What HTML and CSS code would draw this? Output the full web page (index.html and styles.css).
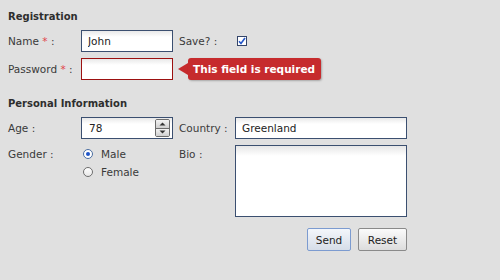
FILE: index.html
```html
<!DOCTYPE html>
<html>
<head>
<meta charset="utf-8">
<link rel="stylesheet" href="styles.css">
</head>
<body>
<div class="page">
  <h2 class="section-title">Registration</h2>
  <div class="grid">
    <label class="label">Name <span class="req">*</span> :</label>
    <input class="field" type="text" value="John">
    <label class="label label-2">Save? :</label>
    <div class="check-cell">
      <span class="checkbox">
        <svg width="8" height="8" viewBox="0 0 8 8"><path d="M1 4.2 L3 6.5 L7 1" fill="none" stroke="#2456c8" stroke-width="1.6"/></svg>
      </span>
    </div>

    <label class="label">Password <span class="req">*</span> :</label>
    <input class="field field-error" type="password" value="">
    <div class="tip-cell">
      <span class="tip-arrow"></span>
      <span class="tip">This field is required</span>
    </div>
  </div>

  <h2 class="section-title section-title-2">Personal Information</h2>
  <div class="grid">
    <label class="label">Age :</label>
    <div class="field spin-field">
      <span class="spin-value">78</span>
      <span class="spinner">
        <span class="spin-btn"><svg width="7" height="4" viewBox="0 0 7 4"><path d="M0.5 3.5 L3.5 0.5 L6.5 3.5Z" fill="#333"/></svg></span>
        <span class="spin-btn"><svg width="7" height="4" viewBox="0 0 7 4"><path d="M0.5 0.5 L3.5 3.5 L6.5 0.5Z" fill="#333"/></svg></span>
      </span>
    </div>
    <label class="label label-2">Country :</label>
    <input class="field" type="text" value="Greenland">

    <label class="label label-top">Gender :</label>
    <div class="radios">
      <div class="radio-item"><span class="radio radio-on"></span><span>Male</span></div>
      <div class="radio-item"><span class="radio"></span><span>Female</span></div>
    </div>
    <label class="label label-2 label-top">Bio :</label>
    <textarea class="field bio"></textarea>
  </div>

  <div class="actions">
    <button class="btn btn-default">Send</button>
    <button class="btn">Reset</button>
  </div>
</div>
</body>
</html>
```
FILE: styles.css
```css
* { box-sizing: border-box; }
html, body {
  margin: 0;
  padding: 0;
  background: #e0e0e0;
}
body {
  font-family: "DejaVu Sans", "Liberation Sans", sans-serif;
  font-size: 10.5px;
  color: #333;
}
.page {
  width: 407px;
  padding: 10px 0 0 8px;
}
.section-title {
  margin: 0;
  height: 14px;
  line-height: 14px;
  font-size: 10px;
  font-weight: bold;
  color: #2e2e2e;
}
.section-title-2 {
  margin-top: 17px;
}
.grid {
  display: grid;
  grid-template-columns: 73px 92px 62px 172px;
  grid-auto-rows: auto;
  row-gap: 6px;
  margin-top: 6px;
  align-items: center;
}
.label {
  line-height: 14px;
  color: #3a3a3a;
  white-space: nowrap;
}
.label-2 { padding-left: 6px; }
.label-top {
  align-self: start;
  padding-top: 2px;
}
.req { color: #e0454a; }
.field {
  height: 22px;
  width: 100%;
  margin: 0;
  border: 1px solid #3b4f70;
  border-radius: 0;
  background: linear-gradient(#e9e9e9, #ffffff 6px);
  font: inherit;
  color: #222;
  padding: 0 0 0 6px;
  outline: none;
}
.field-error {
  border-color: #9c1111;
}
.check-cell {
  display: flex;
  align-items: center;
  padding-left: 2px;
}
.checkbox {
  width: 10px;
  height: 10px;
  border: 1px solid #34456a;
  background: #fff;
  display: flex;
  align-items: center;
  justify-content: center;
}
.tip-cell {
  grid-column: 3 / span 2;
  display: flex;
  align-items: center;
  height: 22px;
  padding-left: 5px;
}
.tip-arrow {
  width: 0;
  height: 0;
  border-top: 6px solid transparent;
  border-bottom: 6px solid transparent;
  border-right: 10px solid #c62b2d;
}
.tip {
  height: 22px;
  line-height: 22px;
  padding: 0 6px 0 5px;
  background: #c62b2d;
  color: #fff;
  font-weight: bold;
  border-radius: 3px;
  box-shadow: 1px 1px 2px rgba(0,0,0,0.25);
  white-space: nowrap;
}
.spin-field {
  display: flex;
  align-items: center;
  padding-left: 7px;
  padding-right: 2px;
}
.spin-value { flex: 1; }
.spinner {
  width: 15px;
  height: 18px;
  display: flex;
  flex-direction: column;
  border: 1px solid #6c6c6c;
  border-radius: 2px;
  overflow: hidden;
}
.spin-btn {
  flex: 1;
  display: flex;
  align-items: center;
  justify-content: center;
  background: linear-gradient(#f4f4f4, #cfcfcf);
}
.spin-btn + .spin-btn { border-top: 1px solid #6c6c6c; }
.radios {
  align-self: start;
  display: flex;
  flex-direction: column;
  padding-left: 2px;
}
.radio-item {
  height: 18px;
  display: flex;
  align-items: center;
  gap: 8px;
  color: #3a3a3a;
}
.radio {
  width: 10px;
  height: 10px;
  border-radius: 50%;
  border: 1px solid #6e6e6e;
  background: linear-gradient(#ffffff, #e8e8e8);
  display: flex;
  align-items: center;
  justify-content: center;
}
.radio-on { border-color: #4a6da0; background: #fff; }
.radio-on::after {
  content: "";
  width: 4px;
  height: 4px;
  border-radius: 50%;
  background: #1f55c8;
}
.bio {
  height: 72px;
  resize: none;
  background: linear-gradient(#e6e6e6, #ffffff 10px);
}
.actions {
  display: flex;
  justify-content: flex-end;
  gap: 7px;
  margin-top: 11px;
}
.btn {
  height: 23px;
  padding: 0;
  font: inherit;
  color: #222;
  border: 1px solid #8a8a8a;
  border-radius: 2px;
  background: linear-gradient(#fbfbfb, #dcdcdc);
  width: 49px;
}
.btn-default {
  width: 44px;
  border-color: #7c9bd0;
  background: linear-gradient(#f3f6fb, #d6dde8);
}
```
